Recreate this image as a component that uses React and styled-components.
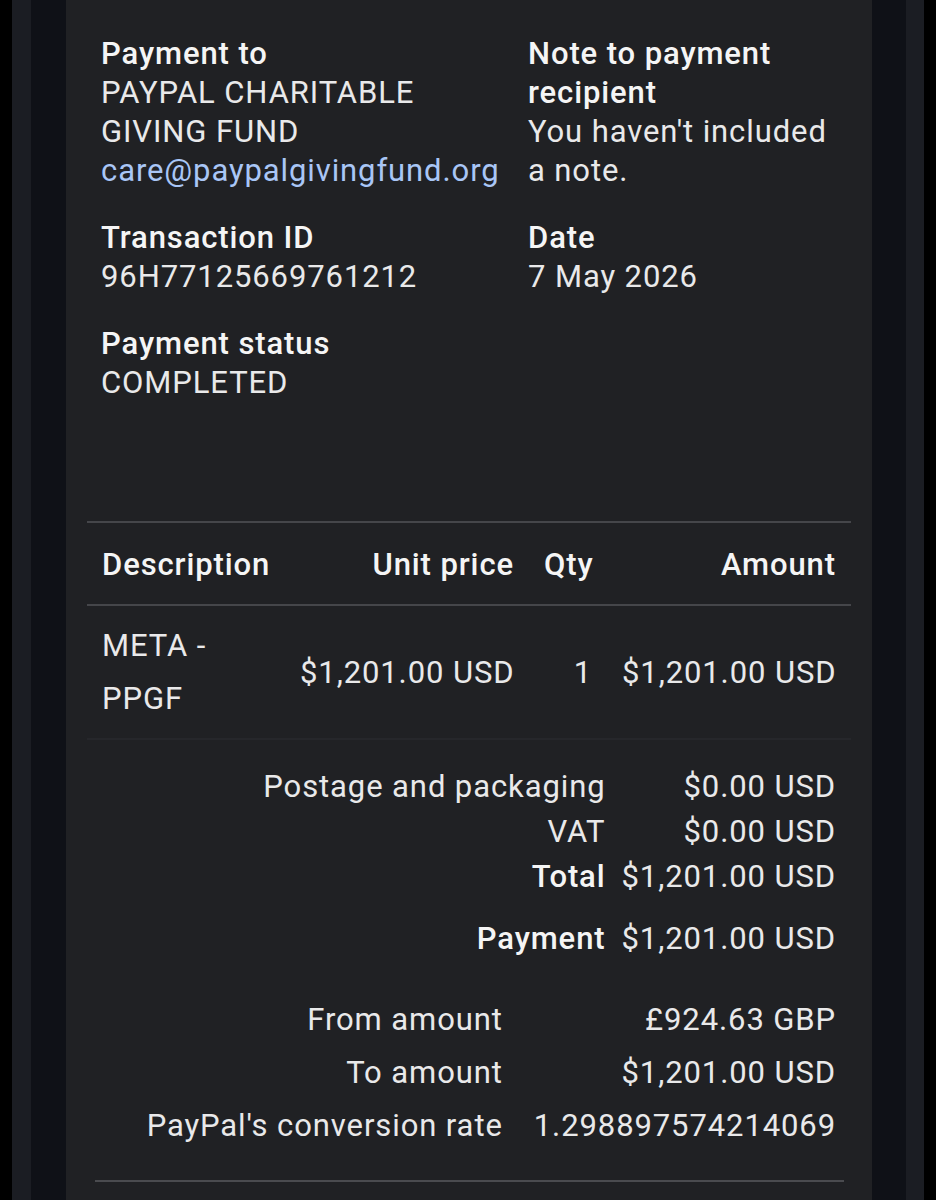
import React from "react";
import styled, { createGlobalStyle } from "styled-components";

const GlobalStyle = createGlobalStyle`
  html, body {
    margin: 0;
    padding: 0;
    background: #000;
  }
  body {
    font-family: Roboto, "Noto Sans", "Liberation Sans", sans-serif;
    color: #ededee;
    -webkit-font-smoothing: antialiased;
  }
`;

const Screen = styled.div`
  background: #000;
  padding: 0 13px 0 12px;
  min-height: 1200px;
  display: flex;
`;

const Bezel = styled.div`
  flex: 1;
  display: flex;
  background: #1b1d23;
  padding: 0 18px 0 19px;
`;

const Gutter = styled.div`
  flex: 1;
  display: flex;
  background: #0f1117;
  padding: 0 34px 0 35px;
`;

const Panel = styled.div`
  flex: 1;
  background: #202124;
  padding: 34px 0 0;
  font-size: 31px;
  line-height: 39px;
  letter-spacing: 0.9px;
`;

const InfoGrid = styled.div`
  display: grid;
  grid-template-columns: 409px 1fr;
  column-gap: 18px;
  row-gap: 28px;
  padding: 0 36px 0 35px;
`;

const Field = styled.div`
  min-width: 0;
`;

const Label = styled.div`
  font-weight: 500;
  color: #f5f5f5;
`;

const Value = styled.div`
  color: ${(p) => (p.$link ? "#a9c6f6" : "#e9e9ea")};
`;

const Divider = styled.div`
  height: 2px;
  background: ${(p) => p.$color || "#45464a"};
  margin: ${(p) => p.$margin || "0 21px"};
`;

const Table = styled.div`
  margin-top: 119px;
`;

const Row = styled.div`
  display: grid;
  grid-template-columns: 198px 244px 78px 244px;
  align-items: center;
  margin: 0 21px;
  padding: ${(p) => p.$padding};
`;

const Cell = styled.div`
  padding: 0 15px;
  text-align: ${(p) => p.$align || "left"};
  font-weight: ${(p) => (p.$head ? 500 : 400)};
  line-height: ${(p) => p.$lh || "39px"};
  color: ${(p) => (p.$head ? "#f5f5f5" : "#e9e9ea")};
  white-space: ${(p) => (p.$wrap ? "normal" : "nowrap")};
`;

const Summary = styled.div`
  display: grid;
  grid-template-columns: 1fr auto;
  column-gap: ${(p) => p.$gap};
  margin: ${(p) => p.$margin};
  padding: 0 36px 0 0;
  line-height: ${(p) => p.$lh};
`;

const SumLabel = styled.div`
  text-align: right;
  font-weight: ${(p) => (p.$strong ? 500 : 400)};
  color: ${(p) => (p.$strong ? "#f5f5f5" : "#e9e9ea")};
  margin-top: ${(p) => p.$gapTop || 0};
`;

const SumValue = styled.div`
  text-align: right;
  white-space: nowrap;
  color: #e9e9ea;
  margin-top: ${(p) => p.$gapTop || 0};
`;

const totals = [
  { label: "Postage and packaging", value: "$0.00 USD" },
  { label: "VAT", value: "$0.00 USD" },
  { label: "Total", value: "$1,201.00 USD", strong: true },
  { label: "Payment", value: "$1,201.00 USD", strong: true, gapTop: "17px" },
];

const conversion = [
  { label: "From amount", value: "£924.63 GBP" },
  { label: "To amount", value: "$1,201.00 USD" },
  { label: "PayPal's conversion rate", value: "1.298897574214069" },
];

export default function App() {
  return (
    <>
      <GlobalStyle />
      <Screen>
        <Bezel>
          <Gutter>
            <Panel>
              <InfoGrid>
                <Field>
                  <Label>Payment to</Label>
                  <Value>PAYPAL CHARITABLE GIVING FUND</Value>
                  <Value $link>care@paypalgivingfund.org</Value>
                </Field>
                <Field>
                  <Label>Note to payment recipient</Label>
                  <Value>You haven't included a note.</Value>
                </Field>
                <Field>
                  <Label>Transaction ID</Label>
                  <Value>96H77125669761212</Value>
                </Field>
                <Field>
                  <Label>Date</Label>
                  <Value>7 May 2026</Value>
                </Field>
                <Field>
                  <Label>Payment status</Label>
                  <Value>COMPLETED</Value>
                </Field>
              </InfoGrid>

              <Table>
                <Divider />
                <Row $padding="22px 0 20px">
                  <Cell $head>Description</Cell>
                  <Cell $head $align="right">Unit price</Cell>
                  <Cell $head>Qty</Cell>
                  <Cell $head $align="right">Amount</Cell>
                </Row>
                <Divider />
                <Row $padding="13px 0 13px">
                  <Cell $wrap $lh="53px">META - PPGF</Cell>
                  <Cell $align="right">$1,201.00 USD</Cell>
                  <Cell $align="right">1</Cell>
                  <Cell $align="right">$1,201.00 USD</Cell>
                </Row>
                <Divider $color="#26272b" />
              </Table>

              <Summary $gap="16px" $lh="45px" $margin="24px 0 0">
                {totals.map((t) => (
                  <React.Fragment key={t.label}>
                    <SumLabel $strong={t.strong} $gapTop={t.gapTop}>
                      {t.label}
                    </SumLabel>
                    <SumValue $gapTop={t.gapTop}>{t.value}</SumValue>
                  </React.Fragment>
                ))}
              </Summary>

              <Summary $gap="31px" $lh="53px" $margin="32px 0 28px">
                {conversion.map((c) => (
                  <React.Fragment key={c.label}>
                    <SumLabel>{c.label}</SumLabel>
                    <SumValue>{c.value}</SumValue>
                  </React.Fragment>
                ))}
              </Summary>

              <Divider $color="#4a4b4f" $margin="0 28px 0 29px" />
            </Panel>
          </Gutter>
        </Bezel>
      </Screen>
    </>
  );
}
